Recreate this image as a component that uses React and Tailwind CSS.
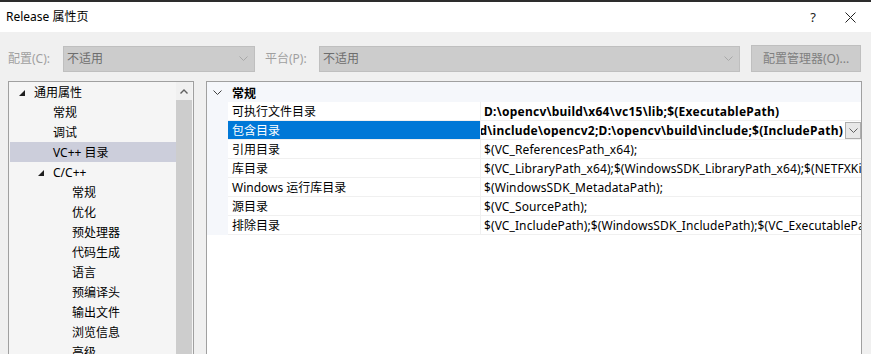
import React from 'react';

const treeItems = [
  { label: '通用属性', level: 0, expand: true },
  { label: '常规', level: 1 },
  { label: '调试', level: 1 },
  { label: 'VC++ 目录', level: 1, selected: true },
  { label: 'C/C++', level: 1, expand: true },
  { label: '常规', level: 2 },
  { label: '优化', level: 2 },
  { label: '预处理器', level: 2 },
  { label: '代码生成', level: 2 },
  { label: '语言', level: 2 },
  { label: '预编译头', level: 2 },
  { label: '输出文件', level: 2 },
  { label: '浏览信息', level: 2 },
  { label: '高级', level: 2 },
];

const props = [
  { name: '可执行文件目录', value: 'D:\\opencv\\build\\x64\\vc15\\lib;$(ExecutablePath)', bold: true },
  { name: '包含目录', value: 'D:\\opencv\\build\\include\\opencv2;D:\\opencv\\build\\include;$(IncludePath)', bold: true, selected: true },
  { name: '引用目录', value: '$(VC_ReferencesPath_x64);' },
  { name: '库目录', value: '$(VC_LibraryPath_x64);$(WindowsSDK_LibraryPath_x64);$(NETFXKitsDir)Lib\\um\\x64' },
  { name: 'Windows 运行库目录', value: '$(WindowsSDK_MetadataPath);' },
  { name: '源目录', value: '$(VC_SourcePath);' },
  { name: '排除目录', value: '$(VC_IncludePath);$(WindowsSDK_IncludePath);$(VC_ExecutablePath_x64);$(VC_LibraryPath_x64)' },
];

// 小三角（树节点展开标记）
function Tri() {
  return (
    <svg width="6" height="6" viewBox="0 0 6 6" className="shrink-0">
      <polygon points="6,0 6,6 0,6" fill="#1e1e1e" />
    </svg>
  );
}

function Chevron({ color = '#a8a8a8' }) {
  return (
    <svg width="9" height="5" viewBox="0 0 9 5">
      <polyline points="0.5,0.5 4.5,4.5 8.5,0.5" fill="none" stroke={color} strokeWidth="1" />
    </svg>
  );
}

function Dropdown({ width }) {
  return (
    <div className={`${width} h-[26px] bg-[#cccccc] border border-[#bfbfbf] flex items-center pl-[3px] pr-[6px]`}>
      <span className="text-[#6d6d6d]">不适用</span>
      <span className="ml-auto"><Chevron /></span>
    </div>
  );
}

export default function App() {
  return (
    <div className="w-[871px] h-[354px] overflow-hidden bg-[#f0f0f0] text-[12px] leading-none text-black font-['Noto_Sans','Noto_Sans_CJK_SC',sans-serif]">
      <div className="h-[2px] bg-[#2d2d2d]" />
      <div className="h-[30px] bg-white flex items-center pl-[6px]">
        <span className="-mt-[1px]">Release 属性页</span>
        <span className="ml-auto mr-[29px] text-[13px] text-[#222]">?</span>
        <svg width="11" height="11" viewBox="0 0 11 11" className="mr-[15px]">
          <path d="M0.5 0.5 L10.5 10.5 M10.5 0.5 L0.5 10.5" stroke="#222" strokeWidth="1" />
        </svg>
      </div>

      <div className="mt-[13px] h-[27px] flex items-center pl-[8px]">
        <span className="w-[55px] text-[#a0a0a0]">配置(C):</span>
        <Dropdown width="w-[192px]" />
        <span className="ml-[10px] w-[54px] text-[#a0a0a0]">平台(P):</span>
        <Dropdown width="w-[421px]" />
        <div className="ml-[11px] w-[110px] h-[27px] bg-[#cccccc] border border-[#bfbfbf] flex items-center justify-center text-[#808080]">
          配置管理器(O)...
        </div>
      </div>

      <div className="mt-[9px] flex pl-[8px] h-[300px]">
        {/* 左侧树 */}
        <div className="w-[186px] border border-[#a0a0a0] bg-[#f5f5f5] flex pl-[1px] pr-[1px]">
          <div className="w-[166px]">
            {treeItems.map((it, i) => (
              <div
                key={i}
                className={`h-[20px] flex items-center pt-[2px] ${it.selected ? 'bg-[#cccedb]' : ''}`}
              >
                {it.level === 0 && (
                  <>
                    <span className="ml-[9px] w-[15px]"><Tri /></span>
                    <span>{it.label}</span>
                  </>
                )}
                {it.level === 1 && it.expand && (
                  <>
                    <span className="ml-[28px] w-[15px]"><Tri /></span>
                    <span>{it.label}</span>
                  </>
                )}
                {it.level === 1 && !it.expand && <span className="ml-[43px]">{it.label}</span>}
                {it.level === 2 && <span className="ml-[62px]">{it.label}</span>}
              </div>
            ))}
          </div>
          <div className="w-[16px] flex flex-col">
            <div className="h-[18px] bg-[#f0f0f0] flex items-center justify-center">
              <svg width="8" height="5" viewBox="0 0 8 5">
                <polyline points="0.5,4.5 4,1 7.5,4.5" fill="none" stroke="#606060" strokeWidth="1.4" />
              </svg>
            </div>
            <div className="flex-1 bg-[#cdcdcd]" />
          </div>
        </div>

        {/* 右侧属性表 */}
        <div className="ml-[12px] w-[656px] border border-[#a0a0a0] bg-white overflow-hidden">
          <div className="h-[20px] bg-[#f5f7fb] flex items-center">
            <span className="ml-[6px] w-[19px]"><Chevron color="#404040" /></span>
            <span className="font-bold pt-[3px]">常规</span>
          </div>
          {props.map((p, i) => (
            <div key={i} className="h-[19px] flex">
              <div className="w-[21px] bg-[#f5f7fb]" />
              <div
                className={`w-[252px] border-b border-[#f0f0f0] flex items-center pl-[4px] pt-[2px] whitespace-nowrap ${
                  p.selected ? 'bg-[#0078d7] text-white' : ''
                }`}
              >
                {p.name}
              </div>
              <div className="flex-1 min-w-0 border-b border-l border-[#f0f0f0] flex items-center pt-[2px] overflow-hidden">
                {p.selected ? (
                  <>
                    <div className="flex-1 min-w-0 overflow-hidden flex justify-end pr-[2px]">
                      <span className="font-bold whitespace-nowrap tracking-[0.25px]">{p.value}</span>
                    </div>
                    <div className="w-[16px] h-[17px] -mt-[2px] border border-[#adadad] bg-[#e8e8e8] flex items-center justify-center">
                      <Chevron color="#606060" />
                    </div>
                  </>
                ) : (
                  <span className={`pl-[3px] whitespace-nowrap ${p.bold ? 'font-bold tracking-[0.25px]' : 'tracking-[0.1px]'}`}>{p.value}</span>
                )}
              </div>
            </div>
          ))}
        </div>
      </div>
    </div>
  );
}
